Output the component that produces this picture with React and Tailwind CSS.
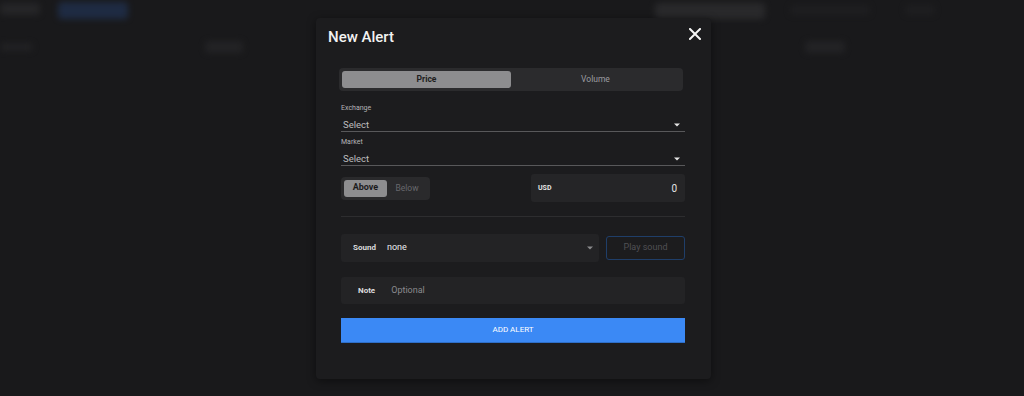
import React from "react";

function Caret({ color = "#e5e5e5" }) {
  return (
    <svg width="6" height="4" viewBox="0 0 6 4" className="shrink-0">
      <polygon points="0,0.5 6,0.5 3,3.5" fill={color} />
    </svg>
  );
}

function SelectField({ label }) {
  return (
    <div className="flex flex-col">
      <div className="text-[7px] leading-[9px] text-[#b4b4b6] mt-[6px]">{label}</div>
      <div className="mt-[6px] flex items-center justify-between h-[12px] pl-[2px] pr-[5px] border-b border-[#58585a] box-content">
        <span className="text-[9.5px] leading-[12px] text-[#bdbdbf]">Select</span>
        <Caret />
      </div>
    </div>
  );
}

export default function App() {
  return (
    <div className="relative w-[1024px] h-[396px] overflow-hidden bg-[#19191b] font-['Roboto',sans-serif]">
      {/* blurred page behind */}
      <div className="blur-[3px] opacity-90">
        <div className="flex items-start pt-[3px] h-[36px]">
          <div className="w-[40px] h-[12px] rounded bg-[#272729]" />
          <div className="ml-[18px] -mt-[1px] w-[70px] h-[17px] rounded bg-[#1f2d47]" />
          <div className="ml-[527px] w-[110px] h-[16px] rounded bg-[#2b2b2d]" />
          <div className="ml-[25px] mt-[2px] w-[80px] h-[10px] rounded bg-[#1f1f21]" />
          <div className="ml-[35px] mt-[2px] w-[30px] h-[10px] rounded bg-[#1f1f21]" />
        </div>
        <div className="flex items-start pt-[7px]">
          <div className="w-[33px] h-[8px] rounded bg-[#232325]" />
          <div className="ml-[172px] -mt-[2px] w-[38px] h-[12px] rounded bg-[#242426]" />
          <div className="ml-[562px] -mt-[2px] w-[40px] h-[12px] rounded bg-[#242426]" />
        </div>
      </div>

      {/* modal */}
      <div className="absolute left-[316px] top-[18px] w-[395px] h-[361px] rounded-[4px] bg-[#1c1c1e] shadow-[0_2px_10px_rgba(0,0,0,0.45)]">
        <div className="flex justify-between items-start pt-[9px] pl-[12px] pr-[10px]">
          <div className="text-[15px] leading-[20px] font-medium text-[#f2f2f2]">New Alert</div>
          <svg width="12" height="12" viewBox="0 0 12 12" className="mt-[1px]">
            <path d="M1 1 L11 11 M11 1 L1 11" stroke="#f5f5f5" strokeWidth="2" strokeLinecap="square" />
          </svg>
        </div>

        <div className="flex flex-col pl-[25px] pr-[26px]">
          {/* tabs */}
          <div className="mt-[21px] -ml-[2px] w-[344px] h-[23px] rounded-[4px] bg-[#2b2b2d] p-[3px] flex">
            <div className="flex-1 rounded-[3px] bg-[#8d8d8f] flex items-center justify-center text-[8.5px] font-bold text-[#1e1e20]">
              Price
            </div>
            <div className="flex-1 flex items-center justify-center text-[8.5px] text-[#9c9ca0]">Volume</div>
          </div>

          <div className="mt-[7px]">
            <SelectField label="Exchange" />
          </div>
          <SelectField label="Market" />

          {/* above/below + usd */}
          <div className="mt-[8px] flex items-center justify-between h-[28px]">
            <div className="h-[23px] w-[89px] rounded-[4px] bg-[#2a2a2c] p-[3px] flex">
              <div className="w-[43px] rounded-[3px] bg-[#8d8d8f] flex items-center justify-center text-[9px] font-bold text-[#1b1b1d]">
                Above
              </div>
              <div className="w-[40px] flex items-center justify-center text-[8.5px] text-[#68686c]">Below</div>
            </div>
            <div className="w-[154px] h-[28px] rounded-[3px] bg-[#252527] flex items-center justify-between pl-[7px] pr-[8px]">
              <span className="text-[7px] font-bold text-[#e6e6e6]">USD</span>
              <span className="text-[10px] text-[#e6e6e6]">0</span>
            </div>
          </div>

          <div className="mt-[14px] h-px bg-[#2d2d2f]" />

          {/* sound */}
          <div className="mt-[17px] flex items-center justify-between h-[28px]">
            <div className="w-[258px] h-[28px] rounded-[3px] bg-[#232325] flex items-center pl-[12px] pr-[6px]">
              <span className="text-[8px] font-bold text-[#dcdcde]">Sound</span>
              <span className="ml-[11px] text-[9px] text-[#ececee]">none</span>
              <span className="flex-1" />
              <Caret color="#8a8a8c" />
            </div>
            <div className="w-[79px] h-[24px] rounded-[3px] border-[1.5px] border-[#1f3e69] flex items-center justify-center text-[9px] text-[#505054]">
              Play sound
            </div>
          </div>

          {/* note */}
          <div className="mt-[15px] h-[27px] rounded-[3px] bg-[#232325] flex items-center pl-[17px]">
            <span className="text-[8px] font-bold text-[#dcdcde]">Note</span>
            <span className="ml-[16px] text-[9px] text-[#8a8a8e]">Optional</span>
          </div>

          {/* add alert */}
          <div className="mt-[14px] h-[25px] bg-[#3b89f5] border-b border-[#2f6fc8] flex items-center justify-center text-[8px] text-white uppercase">
            Add Alert
          </div>
        </div>
      </div>
    </div>
  );
}
